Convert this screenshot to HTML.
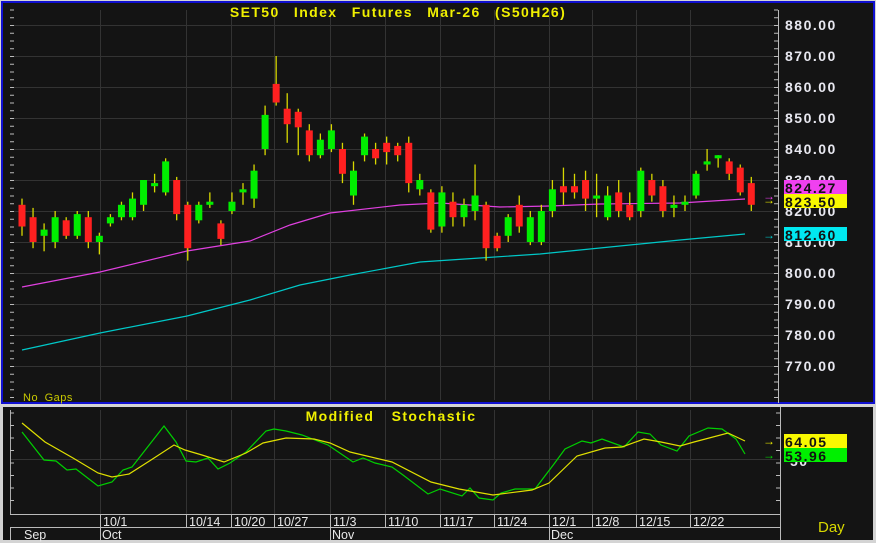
<!DOCTYPE html>
<html><head><meta charset="utf-8"><style>
html,body{margin:0;padding:0;background:#d4d4d4;width:876px;height:543px;overflow:hidden}
svg{display:block}
text{font-family:"Liberation Sans",sans-serif}
</style></head><body>
<svg id="s" width="876" height="543" xmlns="http://www.w3.org/2000/svg">
<rect x="0" y="0" width="876" height="543" fill="#d4d4d4"/>
<rect x="2" y="2" width="872" height="401" fill="#141414" stroke="#1010d0" stroke-width="2"/>
<rect x="3" y="407" width="870" height="133" fill="#141414"/>
<g id="grid" stroke="#333" stroke-width="1"></g>
<line x1="778.5" y1="10" x2="778.5" y2="403" stroke="#bbb"/>
<line x1="780.5" y1="407" x2="780.5" y2="540" stroke="#bbb"/>
<line x1="10" y1="514.5" x2="780" y2="514.5" stroke="#bbb"/>
<line x1="10" y1="527.5" x2="780" y2="527.5" stroke="#bbb"/>
<line x1="10.5" y1="410" x2="10.5" y2="514" stroke="#aaa"/>
<g id="ticks" stroke="#bbb"></g>
<g id="ma"></g>
<g id="c"></g>
<text x="398" y="17" fill="#f0f000" font-size="14" font-weight="bold" text-anchor="middle" letter-spacing="1.4" word-spacing="9">SET50 Index Futures Mar-26 (S50H26)</text>
<text x="23" y="401" fill="#c8c800" font-size="11" letter-spacing="0.5" word-spacing="3">No Gaps</text>
<text x="391" y="421" fill="#f0f000" font-size="14" font-weight="bold" text-anchor="middle" letter-spacing="1.4" word-spacing="12">Modified Stochastic</text>
<g id="ax" fill="#e8e8f0" font-size="14" font-weight="bold" letter-spacing="1.5"></g>
<text x="790" y="466" fill="#e8e8f0" font-size="14" font-weight="bold" letter-spacing="1.5">50</text>
<rect x="784" y="180" width="63" height="14" fill="#f040f0"/>
<text x="785" y="193" fill="#111" font-size="14" font-weight="bold" letter-spacing="1.5">824.27</text>
<rect x="784" y="194" width="63" height="14" fill="#f8f800"/>
<text x="785" y="207" fill="#111" font-size="14" font-weight="bold" letter-spacing="1.5">823.50</text>
<rect x="784" y="227" width="63" height="14" fill="#00e8f0"/>
<text x="785" y="240" fill="#111" font-size="14" font-weight="bold" letter-spacing="1.5">812.60</text>
<text x="763" y="204" fill="#f0f000" font-size="12" font-weight="bold">→</text>
<text x="763" y="200" fill="#f040f0" font-size="12" font-weight="bold">→</text>
<text x="763" y="239" fill="#00d0d0" font-size="12" font-weight="bold">→</text>
<rect x="784" y="434" width="63" height="14" fill="#f8f800"/>
<text x="785" y="447" fill="#111" font-size="14" font-weight="bold" letter-spacing="1.5">64.05</text>
<rect x="784" y="448" width="63" height="14" fill="#00f000"/>
<text x="785" y="461" fill="#111" font-size="14" font-weight="bold" letter-spacing="1.5">53.96</text>
<text x="763" y="445" fill="#f0f000" font-size="12" font-weight="bold">→</text>
<text x="763" y="459" fill="#00e000" font-size="12" font-weight="bold">→</text>
<g id="dl" fill="#e8e8e8" font-size="12.5"></g>
<text x="818" y="532" fill="#d8d800" font-size="15">Day</text>
</svg>
<script>
var NS="http://www.w3.org/2000/svg";
function el(p,t,a,txt){var e=document.createElementNS(NS,t);for(var k in a)e.setAttribute(k,a[k]);if(txt)e.textContent=txt;document.getElementById(p).appendChild(e);return e;}
function Y(p){return 25+(880-p)*3.1;}
var vx=[100,186,231,274,330,385,440,494,549,592,636,690];
vx.forEach(function(x){el("grid","line",{x1:x+.5,y1:10,x2:x+.5,y2:400});el("grid","line",{x1:x+.5,y1:410,x2:x+.5,y2:514});});
for(var p=770;p<=880;p+=10){var y=Y(p);el("grid","line",{x1:10,y1:y+.5,x2:778,y2:y+.5});el("ax","text",{x:785,y:y+5},p.toFixed(2));}
el("grid","line",{x1:10,y1:459.5,x2:780,y2:459.5});
for(var y=10;y<400;y+=7.75){el("ticks","line",{x1:774,y1:y,x2:778,y2:y});el("ticks","line",{x1:10,y1:y,x2:14,y2:y});}
for(var y=413;y<512;y+=12.5){el("ticks","line",{x1:776,y1:y,x2:780,y2:y});el("ticks","line",{x1:10,y1:y,x2:14,y2:y});}
var d=[[822,815,824,812],[818,810,821,808],[812,814,816,807],[810,818,820,808],[817,812,818,811],[812,819,820,811],[818,810,820,808],[810,812,813,806],[816,818,819,815],[818,822,823,817],[818,824,826,817],[822,830,829,820],[828,829,832,826],[826,836,837,825],[830,819,831,817],[822,808,823,804],[817,822,823,816],[822,823,826,821],[816,811,817,809],[820,823,826,819],[826,827,829,822],[824,833,835,821],[840,851,854,838],[861,855,870,854],[853,848,858,842],[852,847,853,838],[846,838,848,836],[838,843,845,837],[840,846,848,839],[840,832,842,829],[825,833,836,822],[838,844,845,836],[840,837,842,835],[842,839,844,835],[841,838,842,836],[842,829,844,826],[827,830,832,825],[826,814,827,813],[815,826,828,813],[823,818,826,815],[818,822,824,815],[820,825,835,817],[822,808,823,804],[812,808,813,807],[812,818,819,810],[822,815,825,813],[810,818,820,809],[810,820,822,809],[820,827,830,818],[828,826,834,822],[828,826,832,824],[830,824,833,820],[824,825,832,818],[818,825,828,817],[826,820,830,818],[822,818,826,817],[820,833,834,818],[830,825,832,823],[828,820,830,818],[821,822,825,818],[822,823,825,820],[825,832,833,824],[835,836,840,833],[837,838,838,834],[836,832,837,830],[834,826,835,825],[829,822,831,820]];
d.forEach(function(c,i){var x=22+i*11.05;var up=c[1]>=c[0];
el("c","line",{x1:x,y1:Y(c[2]),x2:x,y2:Y(c[3]),stroke:"#d8d800","stroke-width":1.3});
var t=Y(Math.max(c[0],c[1])),b=Y(Math.min(c[0],c[1]));if(b-t<2){t-=1;b+=1;}
el("c","rect",{x:x-3.5,y:t,width:7,height:b-t,fill:up?"#00ee00":"#ff2020"});});
function pl(pts,col){el("ma","polyline",{points:pts.map(function(p){return p.join(",")}).join(" "),fill:"none",stroke:col,"stroke-width":1.2});}
pl([[22,287],[100,272],[187,251],[250,241],[290,225],[330,213],[400,205],[440,203],[500,207],[550,206],[600,204],[680,203],[745,199]],"#e040e0");
pl([[22,350],[100,333],[187,316],[250,300],[300,285],[350,275],[420,262],[480,258],[540,254],[600,248],[680,240],[745,234]],"#00c8c8");
pl([[22,432],[44,460],[56,461],[67,470],[76,469],[98,486],[112,482],[123,470],[132,467],[164,426],[176,442],[186,461],[196,462],[208,458],[218,469],[230,463],[246,452],[266,431],[274,429],[286,431],[302,435],[328,445],[353,462],[363,458],[375,463],[392,467],[403,475],[428,494],[440,489],[462,496],[470,488],[479,498],[493,500],[501,493],[515,489],[535,489],[554,464],[565,449],[582,441],[591,443],[602,439],[624,447],[638,432],[650,434],[661,445],[677,451],[689,436],[708,428],[722,429],[736,439],[745,454]],"#00d000");
pl([[22,423],[45,442],[73,458],[98,473],[112,477],[129,474],[151,460],[174,445],[185,450],[202,455],[224,462],[246,453],[263,443],[286,438],[314,439],[330,443],[350,452],[392,462],[431,482],[459,489],[493,495],[532,490],[549,483],[577,456],[605,448],[622,447],[644,439],[661,442],[680,446],[694,442],[728,433],[745,441]],"#e0e000");
var lb=[["10/1",100],["10/14",186],["10/20",231],["10/27",274],["11/3",330],["11/10",385],["11/17",440],["11/24",494],["12/1",549],["12/8",592],["12/15",636],["12/22",690]];
lb.forEach(function(l){el("dl","text",{x:l[1]+3,y:526},l[0]);el("ticks","line",{x1:l[1]+.5,y1:514,x2:l[1]+.5,y2:527});});
[["Sep",22,10],["Oct",100,100],["Nov",330,330],["Dec",549,549]].forEach(function(m){el("dl","text",{x:m[1]+2,y:539},m[0]);el("ticks","line",{x1:m[2]+.5,y1:527,x2:m[2]+.5,y2:540});});
</script>
</body></html>
